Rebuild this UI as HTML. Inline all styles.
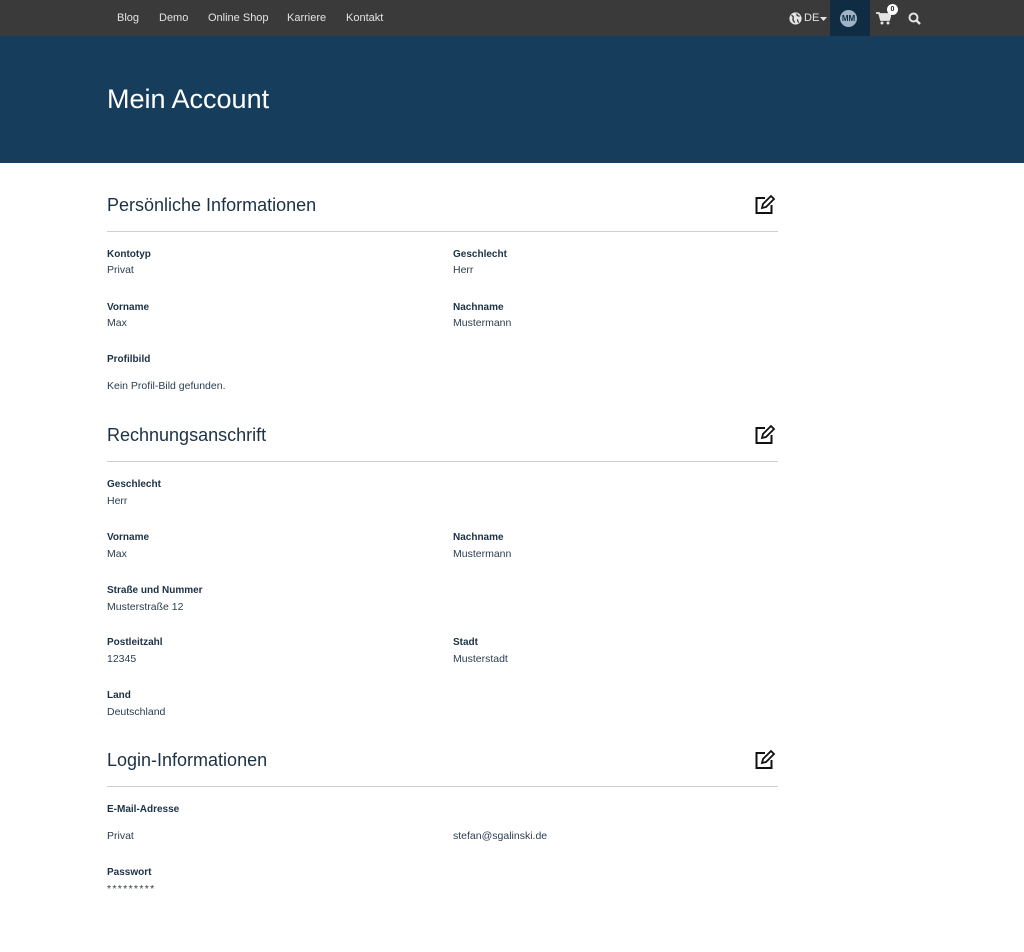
<!DOCTYPE html>
<html><head><meta charset="utf-8"><style>
*{margin:0;padding:0;box-sizing:border-box}
body{width:1024px;height:952px;background:#fff;font-family:"Liberation Sans",sans-serif;color:#1c3144;position:relative;overflow:hidden}
.nav{position:absolute;left:0;top:0;width:1024px;height:36px;background:#3a3a3a}
.nav a{position:absolute;top:12px;font-size:11px;color:#e4e4e4;text-decoration:none}
.user{position:absolute;left:830px;top:0;width:40px;height:36px;background:#0f2c42}
.av{position:absolute;left:10px;top:10px;width:17px;height:17px;border-radius:50%;background:#9fb3c4;color:#0f2c42;font-size:8px;font-weight:bold;text-align:center;line-height:17px}
.hero{position:absolute;left:0;top:36px;width:1024px;height:127px;background:#173d5c}
.hero h1{position:absolute;left:107px;top:48px;font-size:27px;font-weight:normal;color:#fff}
.h2{position:absolute;left:107px;font-size:18px;color:#1c3144}
.line{position:absolute;left:107px;width:671px;height:1px;background:#cfcfcf}
.l{position:absolute;font-size:10px;font-weight:bold;color:#1c3144}
.v{position:absolute;font-size:10.5px;color:#2b3e4f}
.ed{position:absolute;left:754px;width:22px;height:22px}
</style></head><body>
<div class="nav">
<a style="left:117px">Blog</a><a style="left:159px">Demo</a><a style="left:208px">Online Shop</a><a style="left:287px">Karriere</a><a style="left:346px">Kontakt</a>
<svg style="position:absolute;left:789px;top:12px" width="13" height="13" viewBox="0 0 16 16"><circle cx="8" cy="8" r="7.5" fill="#e4e4e4"/><path d="M3 4c2 1 3 2 2 4s1 3 2 5M10 2c-1 2 1 3 3 3M11 9c-1 1 0 3 1 4" stroke="#3a3a3a" stroke-width="1.6" fill="none"/></svg>
<a style="left:804px">DE</a>
<svg style="position:absolute;left:820px;top:17px" width="7" height="4"><path d="M0 0h7L3.5 4z" fill="#e4e4e4"/></svg>
<div class="user"><div class="av">MM</div></div>
<svg style="position:absolute;left:876px;top:12px" width="15" height="13" viewBox="0 0 15 13"><path d="M0 1h3l2 7h8l2-6H4" stroke="#e4e4e4" stroke-width="1.8" fill="#e4e4e4"/><circle cx="6" cy="11" r="1.5" fill="#e4e4e4"/><circle cx="12" cy="11" r="1.5" fill="#e4e4e4"/></svg>
<div style="position:absolute;left:887px;top:4px;width:11px;height:11px;border-radius:50%;background:#fff;color:#222;font-size:7px;font-weight:bold;text-align:center;line-height:11px">0</div>
<svg style="position:absolute;left:908px;top:12px" width="13" height="13" viewBox="0 0 13 13"><circle cx="5.5" cy="5.5" r="4" stroke="#e4e4e4" stroke-width="2" fill="none"/><path d="M8.5 8.5l3.5 3.5" stroke="#e4e4e4" stroke-width="2.4"/></svg>
</div>
<div class="hero"><h1>Mein Account</h1></div>

<svg width="0" height="0" style="position:absolute"><defs><symbol id="e" viewBox="0 0 22 22"><path d="M11 4H2.5v15h15v-8" stroke="#111" stroke-width="2" fill="none"/><path d="M8 14l1-4 8-8 3 3-8 8z" stroke="#111" stroke-width="1.8" fill="none"/></symbol></defs></svg>

<div class="h2" style="top:195px">Persönliche Informationen</div>
<svg class="ed" style="top:194px"><use href="#e"/></svg>
<div class="line" style="top:231px"></div>
<div class="l" style="left:107px;top:249px">Kontotyp</div><div class="v" style="left:107px;top:264px">Privat</div>
<div class="l" style="left:453px;top:249px">Geschlecht</div><div class="v" style="left:453px;top:264px">Herr</div>
<div class="l" style="left:107px;top:302px">Vorname</div><div class="v" style="left:107px;top:317px">Max</div>
<div class="l" style="left:453px;top:302px">Nachname</div><div class="v" style="left:453px;top:317px">Mustermann</div>
<div class="l" style="left:107px;top:354px">Profilbild</div><div class="v" style="left:107px;top:380px">Kein Profil-Bild gefunden.</div>

<div class="h2" style="top:425px">Rechnungsanschrift</div>
<svg class="ed" style="top:424px"><use href="#e"/></svg>
<div class="line" style="top:461px"></div>
<div class="l" style="left:107px;top:479px">Geschlecht</div><div class="v" style="left:107px;top:495px">Herr</div>
<div class="l" style="left:107px;top:532px">Vorname</div><div class="v" style="left:107px;top:548px">Max</div>
<div class="l" style="left:453px;top:532px">Nachname</div><div class="v" style="left:453px;top:548px">Mustermann</div>
<div class="l" style="left:107px;top:585px">Straße und Nummer</div><div class="v" style="left:107px;top:601px">Musterstraße 12</div>
<div class="l" style="left:107px;top:637px">Postleitzahl</div><div class="v" style="left:107px;top:653px">12345</div>
<div class="l" style="left:453px;top:637px">Stadt</div><div class="v" style="left:453px;top:653px">Musterstadt</div>
<div class="l" style="left:107px;top:690px">Land</div><div class="v" style="left:107px;top:706px">Deutschland</div>

<div class="h2" style="top:750px">Login-Informationen</div>
<svg class="ed" style="top:749px"><use href="#e"/></svg>
<div class="line" style="top:786px"></div>
<div class="l" style="left:107px;top:804px">E-Mail-Adresse</div>
<div class="v" style="left:107px;top:830px">Privat</div><div class="v" style="left:453px;top:830px">stefan@sgalinski.de</div>
<div class="l" style="left:107px;top:867px">Passwort</div><div class="v" style="left:107px;top:883px;letter-spacing:1.3px">*********</div>
</body></html>
